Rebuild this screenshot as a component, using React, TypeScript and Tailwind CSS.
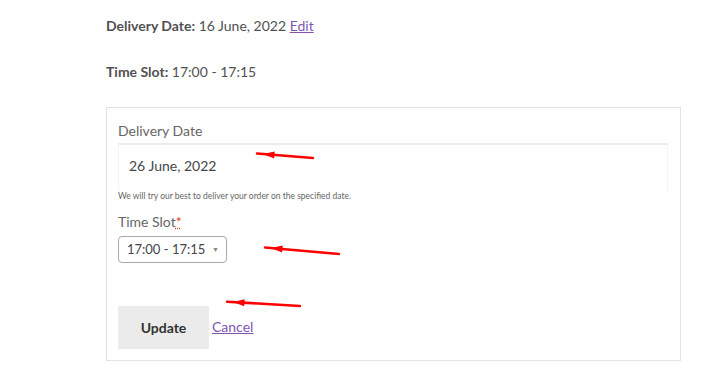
import React from 'react';

const Arrow: React.FC<{ className: string; w: number; h: number; x1: number; y1: number; x2: number; y2: number }> = ({ className, w, h, x1, y1, x2, y2 }) => {
  // head at (x2, y2)
  const ang = Math.atan2(y2 - y1, x2 - x1);
  const len = 12;
  const spread = 0.3;
  const p1 = [x2 - len * Math.cos(ang - spread), y2 - len * Math.sin(ang - spread)];
  const p2 = [x2 - len * Math.cos(ang + spread), y2 - len * Math.sin(ang + spread)];
  return (
    <svg className={className} width={w} height={h} viewBox={`0 0 ${w} ${h}`}>
      <line x1={x1} y1={y1} x2={x2 + 6 * Math.cos(ang)} y2={y2 + 6 * Math.sin(ang)} stroke="#f00" strokeWidth={2.5} strokeLinecap="round" />
      <polygon points={`${x2},${y2} ${p1[0]},${p1[1]} ${p2[0]},${p2[1]}`} fill="#f00" />
    </svg>
  );
};

export default function App() {
  return (
    <div className="relative w-[702px] h-[376px] bg-white text-[#515151]" style={{ fontFamily: 'Lato, "Noto Sans", sans-serif' }}>
      <div className="pl-[106px] pt-[16px]">
        <p className="text-[14px] leading-[20px]">
          <span className="font-bold">Delivery Date:</span> 16 June, 2022{' '}
          <a href="#" className="text-[#7f54b3] underline">Edit</a>
        </p>
        <p className="mt-[26px] text-[14px] leading-[20px]">
          <span className="font-bold">Time Slot:</span> 17:00 - 17:15
        </p>

        <div className="mt-[25px] w-[575px] h-[254px] border border-[#e3e3e3] px-[11px] pt-[13px]">
          <label className="block text-[14px] leading-[20px] text-[#666]">Delivery Date</label>
          <div className="mt-[2px] w-[550px] h-[48px] border-t-2 border-t-[#ececec] border-x border-x-[#f4f4f4] flex items-center pl-[10px] pb-[6px] text-[14px] text-[#43454b]">
            26 June, 2022
          </div>
          <p className="mt-[-1px] text-[8.5px] leading-[12px] text-[#666]">We will try our best to deliver your order on the specified date.</p>

          <label className="block mt-[10px] text-[14px] leading-[20px] text-[#666]">
            Time Slot<span className="text-[#e2401c] underline decoration-dotted">*</span>
          </label>
          <div className="mt-[4px] w-[109px] h-[27px] border border-[#a9a9a9] rounded-[4px] flex items-center pl-[8px] pr-[7px] text-[13px] text-[#43454b]">
            <span>17:00 - 17:15</span>
            <span className="ml-auto text-[7px] text-[#888]">▼</span>
          </div>

          <div className="mt-[43px] flex items-end">
            <button className="w-[91px] h-[43px] bg-[#ebebeb] text-[#333] font-bold text-[14px]">Update</button>
            <a href="#" className="ml-[3px] mb-[12px] text-[14px] text-[#7f54b3] underline">Cancel</a>
          </div>
        </div>
      </div>

      <Arrow className="absolute left-[255px] top-[144px]" w={70} h={22} x1={58} y1={14} x2={8} y2={10} />
      <Arrow className="absolute left-[263px] top-[238px]" w={88} h={24} x1={76} y1={16} x2={8} y2={10} />
      <Arrow className="absolute left-[225px] top-[292px]" w={88} h={22} x1={75} y1={14} x2={8} y2={10} />
    </div>
  );
}
